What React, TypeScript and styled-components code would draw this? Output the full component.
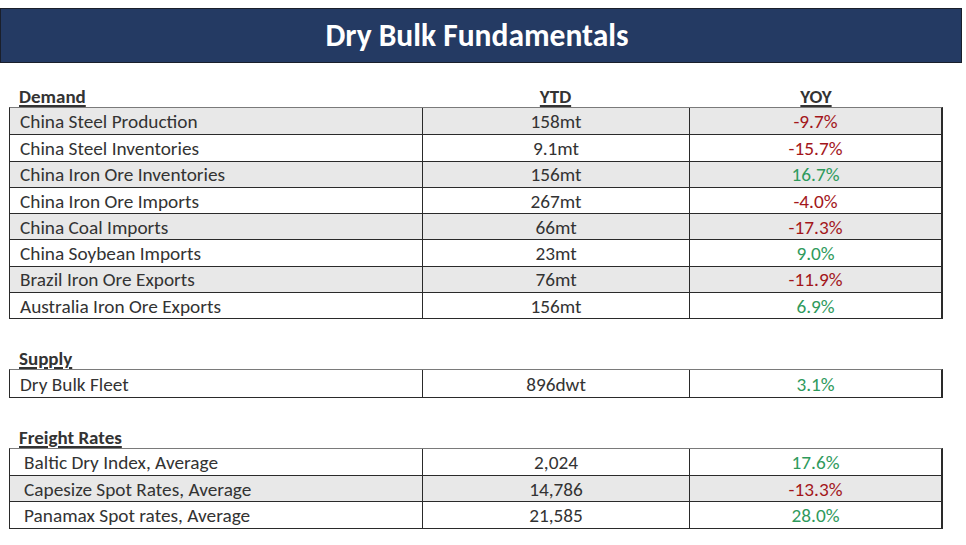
import React from "react";
import styled, { createGlobalStyle } from "styled-components";

const Global = createGlobalStyle`
  *, *::before, *::after { box-sizing: border-box; }
  html, body { margin: 0; padding: 0; background: #ffffff; }
  body { font-family: Carlito, Calibri, Lato, "Liberation Sans", sans-serif; color: #333333; }
`;

const Page = styled.div`
  width: 966px;
  height: 545px;
  padding-top: 8px;
  background: #ffffff;
`;

const TitleBar = styled.div`
  width: 962px;
  height: 55px;
  background: #243a63;
  border: 1.5px solid #1a1f2b;
  display: flex;
  align-items: center;
  justify-content: center;
  color: #ffffff;
  font-weight: 700;
  font-size: 31.5px;
  padding-bottom: 2px;
  padding-right: 8px;
`;

const Content = styled.div`
  width: 934px;
  margin-left: 9px;
  display: flex;
  flex-direction: column;
`;

const Section = styled.section<{ $top: number }>`
  margin-top: ${(p) => p.$top}px;
  display: flex;
  flex-direction: column;
`;

const Cols = styled.div`
  display: grid;
  grid-template-columns: 413px 267px 1fr;
`;

const HeadRow = styled(Cols)`
  height: 22px;
  align-items: end;
  font-size: 19px;
  font-weight: 700;
  color: #333333;
`;

const HeadCell = styled.div<{ $center?: boolean }>`
  text-align: ${(p) => (p.$center ? "center" : "left")};
  padding-left: ${(p) => (p.$center ? 0 : 10)}px;
  line-height: 20px;
  span {
    text-decoration: underline;
    text-underline-offset: 2px;
    text-decoration-thickness: 1.5px;
  }
`;

const Table = styled.div`
  border-top: 1.5px solid #7a7a7a;
  border-left: 1px solid #2a2a2a;
  border-right: 2px solid #2a2a2a;
  border-bottom: 1.5px solid #2a2a2a;
`;

const Row = styled(Cols)<{ $shade: boolean }>`
  height: 26.3px;
  background: ${(p) => (p.$shade ? "#e8e8e8" : "#ffffff")};
  & + & {
    border-top: 1.2px solid #2a2a2a;
  }
`;

const Cell = styled.div<{ $align: "left" | "center"; $tone?: "up" | "down"; $indent?: number }>`
  display: flex;
  align-items: center;
  justify-content: ${(p) => (p.$align === "center" ? "center" : "flex-start")};
  padding-left: ${(p) => p.$indent ?? 0}px;
  font-size: 19.3px;
  color: ${(p) => (p.$tone === "up" ? "#2f9a5c" : p.$tone === "down" ? "#a3161b" : "#333333")};
  border-right: 1px solid #2a2a2a;
  &:last-child { border-right: none; }
  padding-top: 1px;
`;

type Item = { name: string; ytd: string; yoy: string };

const demand: Item[] = [
  { name: "China Steel Production", ytd: "158mt", yoy: "-9.7%" },
  { name: "China Steel Inventories", ytd: "9.1mt", yoy: "-15.7%" },
  { name: "China Iron Ore Inventories", ytd: "156mt", yoy: "16.7%" },
  { name: "China Iron Ore Imports", ytd: "267mt", yoy: "-4.0%" },
  { name: "China Coal Imports", ytd: "66mt", yoy: "-17.3%" },
  { name: "China Soybean Imports", ytd: "23mt", yoy: "9.0%" },
  { name: "Brazil Iron Ore Exports", ytd: "76mt", yoy: "-11.9%" },
  { name: "Australia Iron Ore Exports", ytd: "156mt", yoy: "6.9%" },
];

const supply: Item[] = [{ name: "Dry Bulk Fleet", ytd: "896dwt", yoy: "3.1%" }];

const freight: Item[] = [
  { name: "Baltic Dry Index, Average", ytd: "2,024", yoy: "17.6%" },
  { name: "Capesize Spot Rates, Average", ytd: "14,786", yoy: "-13.3%" },
  { name: "Panamax Spot rates, Average", ytd: "21,585", yoy: "28.0%" },
];

function Block({
  title,
  items,
  top,
  showCols,
  indent,
  shadeOdd,
}: {
  title: string;
  items: Item[];
  top: number;
  showCols?: boolean;
  indent: number;
  shadeOdd: boolean;
}) {
  return (
    <Section $top={top}>
      <HeadRow>
        <HeadCell>
          <span>{title}</span>
        </HeadCell>
        <HeadCell $center>{showCols && <span>YTD</span>}</HeadCell>
        <HeadCell $center>{showCols && <span>YOY</span>}</HeadCell>
      </HeadRow>
      <Table>
        {items.map((it, i) => (
          <Row key={it.name} $shade={shadeOdd ? i % 2 === 0 : i % 2 === 1}>
            <Cell $align="left" $indent={indent}>
              {it.name}
            </Cell>
            <Cell $align="center">{it.ytd}</Cell>
            <Cell $align="center" $tone={it.yoy.startsWith("-") ? "down" : "up"}>
              {it.yoy}
            </Cell>
          </Row>
        ))}
      </Table>
    </Section>
  );
}

export default function App() {
  return (
    <>
      <Global />
      <Page>
        <TitleBar>Dry Bulk Fundamentals</TitleBar>
        <Content>
          <Block title="Demand" items={demand} top={22} showCols indent={10} shadeOdd />
          <Block title="Supply" items={supply} top={28} indent={10} shadeOdd={false} />
          <Block title="Freight Rates" items={freight} top={28} indent={14} shadeOdd={false} />
        </Content>
      </Page>
    </>
  );
}
